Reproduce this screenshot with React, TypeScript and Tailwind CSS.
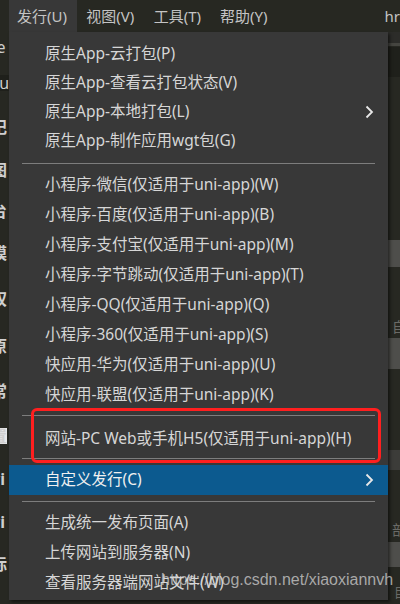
import React from "react";

const font = { fontFamily: '"Noto Sans", "Noto Sans CJK SC", sans-serif' };

function Chevron() {
  return (
    <svg width="9" height="14" viewBox="0 0 9 14" className="absolute right-[14px] top-1/2 -translate-y-1/2">
      <polyline points="1.5,1.5 7,7 1.5,12.5" fill="none" stroke="#e8e8e8" strokeWidth="1.8" />
    </svg>
  );
}

function Item({ label, h = "h-[30px]", arrow = false, active = false }: { label: string; h?: string; arrow?: boolean; active?: boolean }) {
  return (
    <div className={`relative flex items-center pl-[36px] ${h} ${active ? "bg-[#0c5a8f] text-[#f0f0f0]" : "text-[#d6d6d6]"}`}>
      <span className="text-[15.5px] leading-none whitespace-nowrap">{label}</span>
      {arrow && <Chevron />}
    </div>
  );
}

function Sep({ h, top }: { h: string; top: string }) {
  return (
    <div className={`${h} flex flex-col`}>
      <div className={top} />
      <div className="ml-[13px] w-[353px] h-px bg-[#7d7d7d]" />
    </div>
  );
}

const leftRows: { t: string; h: string; cls?: string }[] = [
  { t: "fe", h: "h-[30px]", cls: "font-normal" },
  { t: "vu", h: "h-[42px]", cls: "font-normal bg-[#1f201b]" },
  { t: "记", h: "h-[45px]" },
  { t: "图", h: "h-[42px]" },
  { t: "台", h: "h-[40px]" },
  { t: "模", h: "h-[44px]" },
  { t: "权", h: "h-[48px]" },
  { t: "原", h: "h-[45px]" },
  { t: "常", h: "h-[45px]" },
  { t: "置", h: "h-[45px]", cls: "text-[#333] bg-[#e8e8e8]" },
  { t: "vi", h: "h-[42px]" },
  { t: "vi", h: "h-[44px]" },
  { t: "标", h: "h-[40px]" },
];

export default function App() {
  return (
    <div className="relative w-[400px] h-[604px] overflow-hidden bg-[#272822]" style={font}>
      {/* top menu bar */}
      <div className="flex h-[32px] items-center text-[15px] text-[#c4c4c4]">
        <div className="w-[9px]" />
        <div className="flex h-full w-[69px] items-center pl-[8px] bg-[#383838]">发行(U)</div>
        <div className="ml-[9px] w-[68px]">视图(V)</div>
        <div className="w-[67px]">工具(T)</div>
        <div className="w-[166px]">帮助(Y)</div>
        <div>hr</div>
      </div>

      <div className="flex h-[572px]">
        {/* left editor strip */}
        <div className="flex w-[9px] h-full flex-col overflow-hidden">
          {leftRows.map((c, i) => (
            <div key={i} className={`flex ${c.h} shrink-0 items-center overflow-hidden`}>
              <span className={`-ml-[9px] text-[16px] font-bold leading-none text-[#cfcfcf] ${c.cls ?? ""}`}>{c.t}</span>
            </div>
          ))}
        </div>

        {/* dropdown menu */}
        <div className="relative w-[379px] h-[568px] bg-[#383838] pt-[7px] shadow-[2px_2px_3px_rgba(0,0,0,0.5)]">
          <Item label="原生App-云打包(P)" h="h-[29px]" />
          <Item label="原生App-查看云打包状态(V)" h="h-[29px]" />
          <Item label="原生App-本地打包(L)" h="h-[29px]" arrow />
          <Item label="原生App-制作应用wgt包(G)" h="h-[29px]" />
          <Sep h="h-[15px]" top="h-[8px]" />
          <Item label="小程序-微信(仅适用于uni-app)(W)" />
          <Item label="小程序-百度(仅适用于uni-app)(B)" />
          <Item label="小程序-支付宝(仅适用于uni-app)(M)" />
          <Item label="小程序-字节跳动(仅适用于uni-app)(T)" />
          <Item label="小程序-QQ(仅适用于uni-app)(Q)" />
          <Item label="小程序-360(仅适用于uni-app)(S)" />
          <Item label="快应用-华为(仅适用于uni-app)(U)" />
          <Item label="快应用-联盟(仅适用于uni-app)(K)" />
          <Sep h="h-[14px]" top="h-[5px]" />
          <Item label="网站-PC Web或手机H5(仅适用于uni-app)(H)" />
          <Sep h="h-[11px]" top="h-[4px]" />
          <Item label="自定义发行(C)" active arrow />
          <Sep h="h-[13px]" top="h-[6px]" />
          <Item label="生成统一发布页面(A)" />
          <Item label="上传网站到服务器(N)" />
          <Item label="查看服务器端网站文件(W)" />

          {/* red annotation box */}
          <div className="absolute left-[22px] top-[376px] w-[350px] h-[55px] rounded-[6px] border-[3px] border-[#ff1f1f]" />
        </div>

        {/* right editor strip */}
        <div className="flex flex-1 h-full flex-col overflow-hidden text-[14px] leading-none text-[#6a6a66]">
          <div className="h-[11px] shrink-0 bg-[#2c2c29]" />
          <div className="h-[3px] shrink-0 bg-[#454540]" />
          <div className="mt-px h-[30px] shrink-0 bg-[#1f201b]" />
          <div className="mt-[163px] h-[27px] shrink-0 bg-[#4e4e4b]" />
          <div className="mt-[53px] h-[18px] shrink-0 pl-[4px]">自</div>
          <div className="h-[31px] shrink-0 bg-[#4e4e4b]" />
          <div className="mt-[81px] h-[20px] shrink-0 bg-[#3c3c39]" />
          <div className="mt-[53px] h-[19px] shrink-0 pl-[4px]">部</div>
          <div className="h-[25px] shrink-0 bg-[#4e4e4b]" />
          <div className="mt-[19px] shrink-0 pl-[6px] text-[13px]">目</div>
        </div>
      </div>

      {/* watermark */}
      <div
        className="absolute left-[161px] top-[572px] text-[16px] leading-none text-[rgba(215,215,215,0.72)] whitespace-nowrap"
        style={{ fontFamily: '"Liberation Sans", Arial, sans-serif' }}
      >
        https://blog.csdn.net/xiaoxiannvh
      </div>
    </div>
  );
}
